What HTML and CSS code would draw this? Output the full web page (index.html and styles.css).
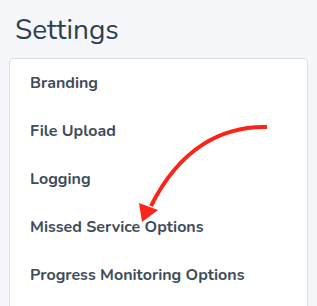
FILE: index.html
```html
<!DOCTYPE html>
<html lang="en">
<head>
    <meta charset="UTF-8">
    <meta name="viewport" content="width=device-width, initial-scale=1.0">
    <title>Settings</title>
    <link rel="stylesheet" href="styles.css">
</head>
<body>

    <!-- Page title -->
    <h1 class="page-title">Settings</h1>

    <!-- Settings menu -->
    <div class="settings-card">
        <a href="#" class="settings-link">Branding</a>
        <a href="#" class="settings-link">File Upload</a>
        <a href="#" class="settings-link">Logging</a>
        <a href="#" class="settings-link">Missed Service Options</a>
        <a href="#" class="settings-link">Progress Monitoring Options</a>
    </div>

    <!-- Annotation arrow -->
    <svg class="annotation" width="317" height="306" viewBox="0 0 317 306">
        <path d="M267,127 C222,126 180,148 151,206" fill="none" stroke="#fb2418" stroke-width="4"/>
        <polygon points="142,222 139,203 158,210" fill="#fb2418"/>
    </svg>

</body>
</html>
```

FILE: styles.css
```css
body {
    margin: 0;
    background-color: #f5f7fb;
    font-family: "Nunito", "Lato", "Open Sans", sans-serif;
    position: relative;
    width: 317px;
    height: 306px;
    overflow: hidden;
}

/* Title */
.page-title {
    margin: 0;
    padding: 11px 0 0 15px;
    font-size: 28px;
    font-weight: 400;
    color: #2f3f50;
    height: 47px;
}

/* Card */
.settings-card {
    margin: 0 9px;
    background-color: white;
    border: 1px solid #dcdfe5;
    border-radius: 4px;
    padding: 12px 0 0;
    display: flex;
    flex-direction: column;
    height: 260px;
}

.settings-link {
    display: block;
    padding: 0 20px;
    height: 48px;
    line-height: 24px;
    font-size: 16px;
    font-weight: 700;
    color: #3e4c5a;
    text-decoration: none;
    flex-shrink: 0;
}

/* Arrow overlay */
.annotation {
    position: absolute;
    top: 0;
    left: 0;
}
```
